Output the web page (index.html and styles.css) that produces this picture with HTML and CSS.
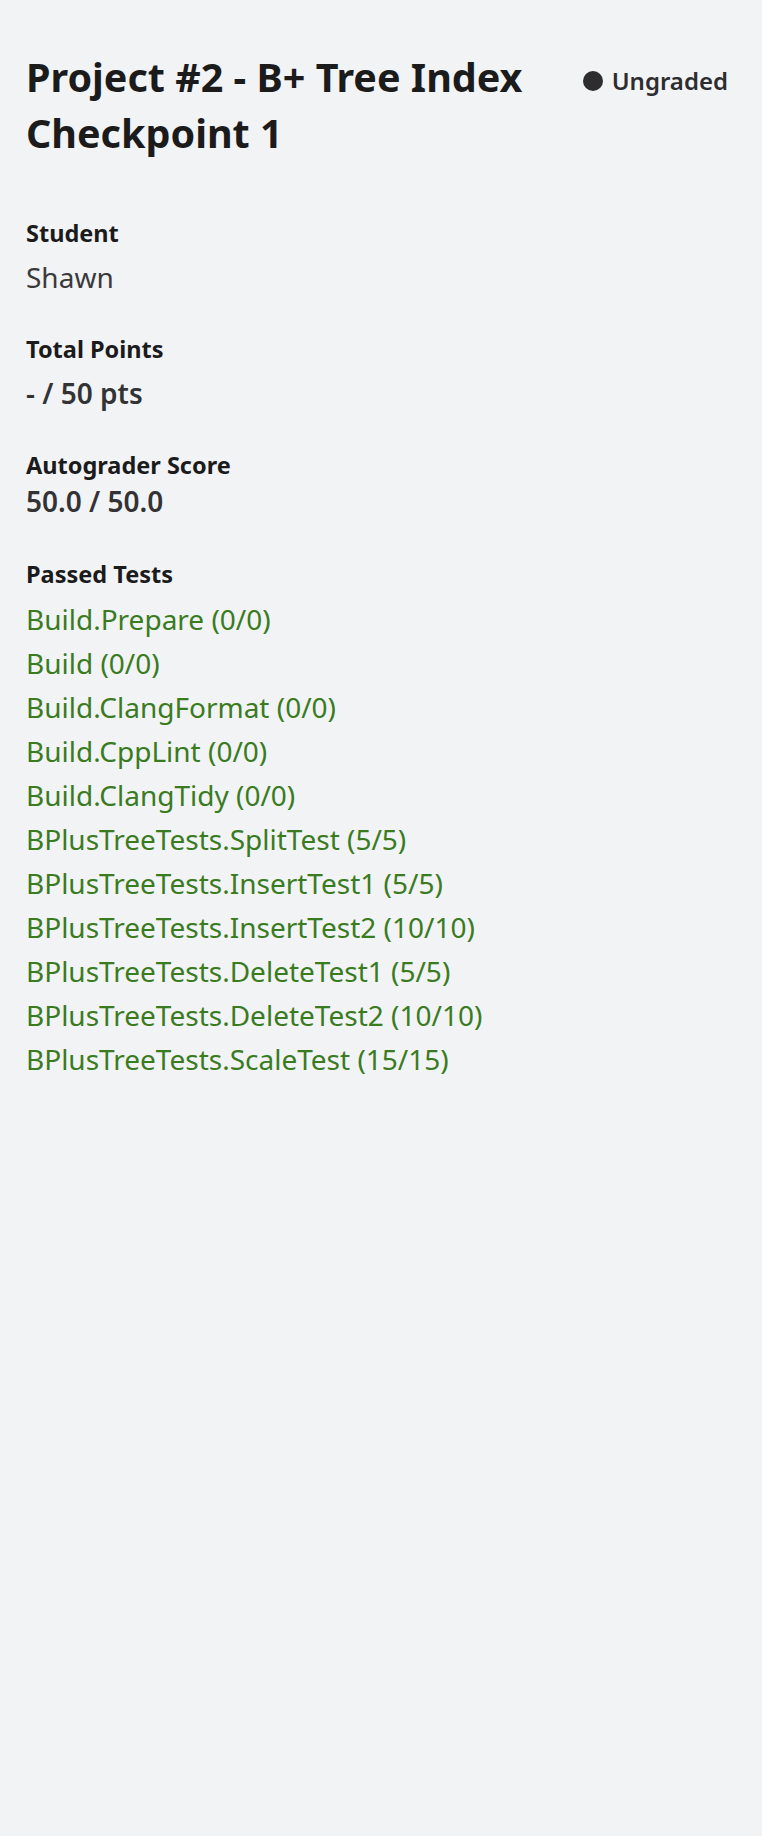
FILE: index.html
```html
<!DOCTYPE html>
<html lang="en">
<head>
<meta charset="utf-8">
<title>Project #2 - B+ Tree Index Checkpoint 1</title>
<link rel="stylesheet" href="styles.css">
</head>
<body>
<main class="page">
  <header class="header">
    <h1 class="title">Project #2 - B+ Tree Index Checkpoint 1</h1>
    <div class="status"><span class="status-dot"></span><span class="status-text">Ungraded</span></div>
  </header>

  <section class="field">
    <div class="label">Student</div>
    <div class="value value-name">Shawn</div>
  </section>

  <section class="field">
    <div class="label">Total Points</div>
    <div class="value value-strong">- / 50 pts</div>
  </section>

  <section class="field field-tight">
    <div class="label">Autograder Score</div>
    <div class="value value-strong">50.0 / 50.0</div>
  </section>

  <section class="field">
    <div class="label">Passed Tests</div>
    <ul class="tests">
      <li>Build.Prepare (0/0)</li>
      <li>Build (0/0)</li>
      <li>Build.ClangFormat (0/0)</li>
      <li>Build.CppLint (0/0)</li>
      <li>Build.ClangTidy (0/0)</li>
      <li>BPlusTreeTests.SplitTest (5/5)</li>
      <li>BPlusTreeTests.InsertTest1 (5/5)</li>
      <li>BPlusTreeTests.InsertTest2 (10/10)</li>
      <li>BPlusTreeTests.DeleteTest1 (5/5)</li>
      <li>BPlusTreeTests.DeleteTest2 (10/10)</li>
      <li>BPlusTreeTests.ScaleTest (15/15)</li>
    </ul>
  </section>
</main>
</body>
</html>
```

FILE: styles.css
```css
html, body {
  margin: 0;
  padding: 0;
  background: #f2f3f5;
}

body {
  font-family: "Noto Sans", "Open Sans", sans-serif;
  color: #1b1b1c;
  min-height: 1836px;
}

.page {
  padding: 49px 34px 40px 26px;
}

.header {
  display: flex;
  justify-content: space-between;
  align-items: flex-start;
  gap: 40px;
  margin-bottom: 55px;
}

.title {
  flex: 1;
  margin: 0;
  font-size: 39.5px;
  line-height: 56px;
  font-weight: 700;
  color: #1b1b1c;
}

.status {
  display: flex;
  align-items: center;
  gap: 9px;
  margin-top: 20px;
  flex-shrink: 0;
}

.status-dot {
  width: 20px;
  height: 20px;
  border-radius: 50%;
  background: #2d2d2f;
}

.status-text {
  font-size: 24px;
  line-height: 24px;
  font-weight: 600;
  color: #2d2d2f;
}

.field {
  margin-bottom: 34px;
}

.label {
  font-size: 23.5px;
  line-height: 34px;
  font-weight: 700;
  color: #1b1b1c;
  margin-bottom: 6px;
}

.field-tight {
  margin-bottom: 35px;
}

.field-tight .label {
  margin-bottom: 0;
}

.field-tight .value {
  margin-top: -2px;
}

.value {
  font-size: 28px;
  line-height: 42px;
  color: #3a3a3c;
}

.value-name {
  font-weight: 400;
}

.value-strong {
  font-weight: 600;
  color: #333335;
}

.tests {
  list-style: none;
  margin: 6px 0 0;
  padding: 0;
}

.tests li {
  font-size: 28px;
  line-height: 44px;
  color: #3a7b1f;
}
```
